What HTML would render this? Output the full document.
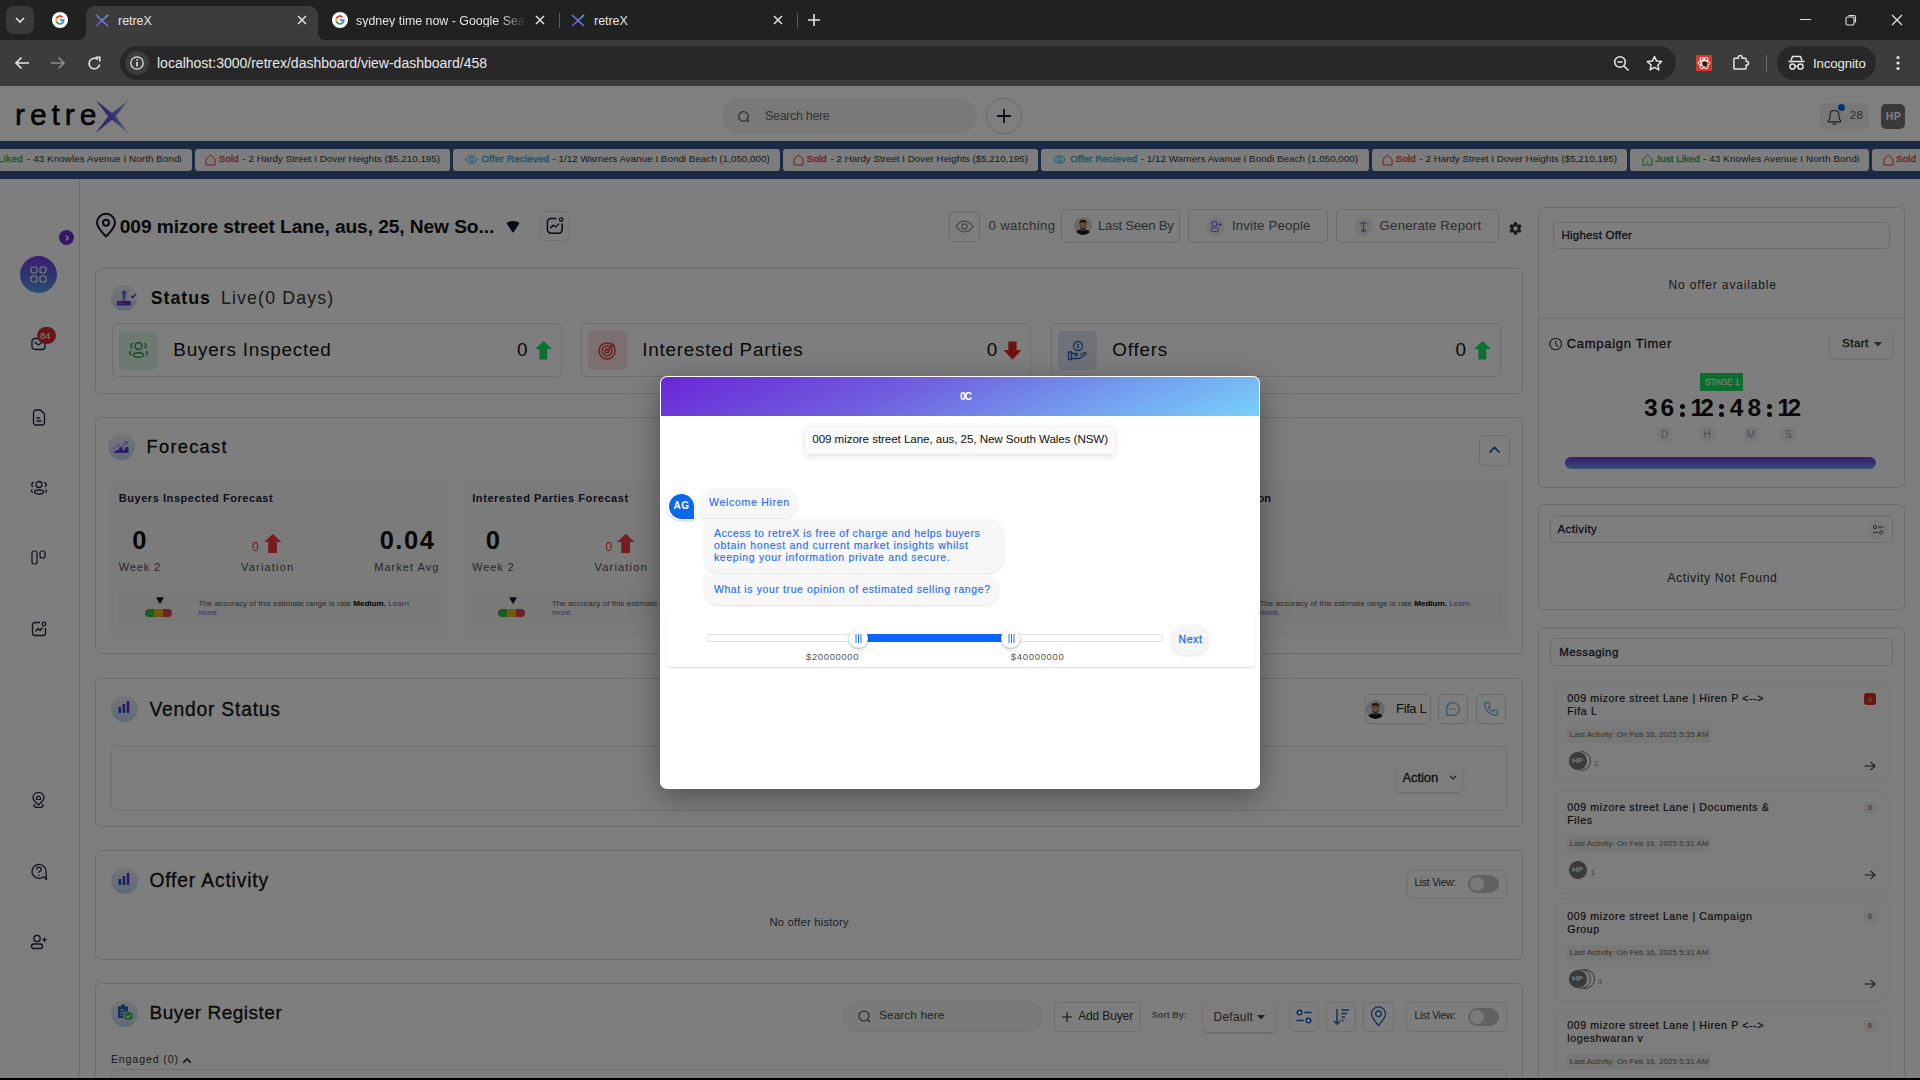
<!DOCTYPE html>
<html><head><meta charset="utf-8">
<style>
*{box-sizing:border-box;margin:0;padding:0}
html,body{width:1920px;height:1080px;overflow:hidden;background:#000;font-family:"Liberation Sans",sans-serif}
.a{position:absolute}
.t{position:absolute;white-space:nowrap;line-height:1}
svg{position:absolute;overflow:visible}
/* chrome */
#frame{left:0;top:0;width:1920px;height:40px;background:#202121}
#toolbar{left:0;top:40px;width:1920px;height:46px;background:#3c3c3c}
.tabtxt{color:#e3e3e3;font-size:12.4px}
/* page */
#page{left:0;top:86px;width:1920px;height:992px;background:#fcfcfc;overflow:hidden}
.card{position:absolute;border:1px solid #dcdcdc;border-radius:6px;background:#fdfdfd}
.btn{position:absolute;border:1px solid #d9d9d9;border-radius:5px;background:#fdfdfd}
#overlay{left:0;top:86px;width:1920px;height:992px;background:rgba(0,0,0,.5)}
</style></head><body>
<!-- ================= BROWSER CHROME ================= -->
<div id="frame" class="a"></div>
<div class="a" style="left:6px;top:6px;width:28px;height:28px;border-radius:8px;background:#3a3a3a"></div>
<svg style="left:14px;top:15px" width="12" height="10"><path d="M2 3 L6 7 L10 3" stroke="#e3e3e3" stroke-width="1.6" fill="none"></path></svg>
<!-- google icon -->
<svg style="left:52px;top:12px" width="16" height="16" viewBox="0 0 16 16"><circle cx="8" cy="8" r="8" fill="#fff"></circle>
<path d="M12.6 8.1c0-.3 0-.6-.1-.9H8v1.7h2.6a2.2 2.2 0 0 1-1 1.5v1.1h1.6c.9-.9 1.4-2 1.4-3.4z" fill="#4285f4"></path>
<path d="M8 12.8c1.3 0 2.4-.4 3.2-1.2l-1.6-1.2c-.4.3-1 .5-1.6.5-1.2 0-2.3-.8-2.6-2H3.7v1.3A4.8 4.8 0 0 0 8 12.8z" fill="#34a853"></path>
<path d="M5.4 8.9a2.9 2.9 0 0 1 0-1.8V5.8H3.7a4.8 4.8 0 0 0 0 4.4z" fill="#fbbc05"></path>
<path d="M8 5.1c.7 0 1.3.2 1.8.7l1.4-1.4A4.8 4.8 0 0 0 3.7 5.8l1.7 1.3c.3-1.2 1.4-2 2.6-2z" fill="#ea4335"></path></svg>
<!-- active tab -->
<div class="a" style="left:86px;top:6px;width:232px;height:34px;background:#3c3c3c;border-radius:9px 9px 0 0"></div>
<div class="a" style="left:78px;top:32px;width:8px;height:8px;background:radial-gradient(circle at 0 0,#202121 8px,#3c3c3c 8.5px)"></div>
<div class="a" style="left:318px;top:32px;width:8px;height:8px;background:radial-gradient(circle at 100% 0,#202121 8px,#3c3c3c 8.5px)"></div>
<svg style="left:95px;top:14px" width="14" height="13" viewBox="0 0 14 13"><defs><linearGradient id="gx" x1="0" y1="1" x2="1" y2="0"><stop offset="0" stop-color="#7b3fe4"></stop><stop offset="1" stop-color="#5fb0f0"></stop></linearGradient></defs><path d="M1 1 L13 12 M13 1 L1 12" stroke="url(#gx)" stroke-width="1.6"></path></svg>
<div class="t tabtxt" style="left:118px;top:14.5px">retreX</div>
<svg style="left:297px;top:15px" width="10" height="10"><path d="M1 1L9 9M9 1L1 9" stroke="#e3e3e3" stroke-width="1.5"></path></svg>
<!-- tab 2 -->
<svg style="left:332px;top:12px" width="16" height="16" viewBox="0 0 16 16"><circle cx="8" cy="8" r="8" fill="#fff"></circle>
<path d="M12.6 8.1c0-.3 0-.6-.1-.9H8v1.7h2.6a2.2 2.2 0 0 1-1 1.5v1.1h1.6c.9-.9 1.4-2 1.4-3.4z" fill="#4285f4"></path>
<path d="M8 12.8c1.3 0 2.4-.4 3.2-1.2l-1.6-1.2c-.4.3-1 .5-1.6.5-1.2 0-2.3-.8-2.6-2H3.7v1.3A4.8 4.8 0 0 0 8 12.8z" fill="#34a853"></path>
<path d="M5.4 8.9a2.9 2.9 0 0 1 0-1.8V5.8H3.7a4.8 4.8 0 0 0 0 4.4z" fill="#fbbc05"></path>
<path d="M8 5.1c.7 0 1.3.2 1.8.7l1.4-1.4A4.8 4.8 0 0 0 3.7 5.8l1.7 1.3c.3-1.2 1.4-2 2.6-2z" fill="#ea4335"></path></svg>
<div class="t tabtxt" style="left:356px;top:14.5px;font-size:12.4px;width:170px;overflow:hidden;-webkit-mask-image:linear-gradient(90deg,#000 85%,transparent)">sydney time now - Google Search</div>
<svg style="left:535px;top:15px" width="10" height="10"><path d="M1 1L9 9M9 1L1 9" stroke="#e3e3e3" stroke-width="1.5"></path></svg>
<div class="a" style="left:559px;top:13px;width:1px;height:15px;background:#5a5a5a"></div>
<!-- tab 3 -->
<svg style="left:571px;top:14px" width="14" height="13" viewBox="0 0 14 13"><path d="M1 1 L13 12 M13 1 L1 12" stroke="url(#gx)" stroke-width="1.6"></path></svg>
<div class="t tabtxt" style="left:594px;top:14.5px">retreX</div>
<svg style="left:773px;top:15px" width="10" height="10"><path d="M1 1L9 9M9 1L1 9" stroke="#e3e3e3" stroke-width="1.5"></path></svg>
<div class="a" style="left:797px;top:13px;width:1px;height:15px;background:#5a5a5a"></div>
<svg style="left:808px;top:14px" width="12" height="12"><path d="M6 0V12M0 6H12" stroke="#e3e3e3" stroke-width="1.6"></path></svg>
<!-- window controls -->
<div class="a" style="left:1800px;top:19px;width:11px;height:1px;background:#e3e3e3"></div>
<svg style="left:1845px;top:14px" width="12" height="12"><rect x="1" y="3" width="8" height="8" rx="1.5" stroke="#e3e3e3" fill="none" stroke-width="1.1"></rect><path d="M3.5 1.5H9a1.5 1.5 0 0 1 1.5 1.5V8.5" stroke="#e3e3e3" fill="none" stroke-width="1.1"></path></svg>
<svg style="left:1891px;top:14px" width="12" height="12"><path d="M1 1L11 11M11 1L1 11" stroke="#e3e3e3" stroke-width="1.3"></path></svg>

<div id="toolbar" class="a"></div>
<svg style="left:14px;top:56px" width="16" height="14"><path d="M15 7H2M7.5 1.5L2 7l5.5 5.5" stroke="#e3e3e3" stroke-width="1.7" fill="none"></path></svg>
<svg style="left:50px;top:56px" width="16" height="14"><path d="M1 7H14M8.5 1.5L14 7l-5.5 5.5" stroke="#8a8a8a" stroke-width="1.7" fill="none"></path></svg>
<svg style="left:87px;top:56px" width="15" height="15"><path d="M12.6 8.5A5.3 5.3 0 1 1 11 3.6" stroke="#e3e3e3" stroke-width="1.6" fill="none"></path><path d="M8.6 1.3H12.8V5.5" stroke="#e3e3e3" stroke-width="1.6" fill="none"></path></svg>
<div class="a" style="left:120px;top:46px;width:1556px;height:34px;border-radius:17px;background:#282828"></div>
<div class="a" style="left:125px;top:51px;width:24px;height:24px;border-radius:12px;background:#3c3c3c"></div>
<svg style="left:130px;top:56px" width="14" height="14"><circle cx="7" cy="7" r="6.2" stroke="#e3e3e3" stroke-width="1.3" fill="none"></circle><path d="M7 6V10.5" stroke="#e3e3e3" stroke-width="1.6"></path><circle cx="7" cy="3.9" r="0.9" fill="#e3e3e3"></circle></svg>
<div class="t" style="left:157px;top:56px;font-size:14px;color:#e8e8e8">localhost<span style="color:#e8e8e8">:3000/retrex/dashboard/view-dashboard/458</span></div>
<svg style="left:1613px;top:55px" width="17" height="17"><circle cx="7" cy="7" r="5.3" stroke="#e3e3e3" stroke-width="1.6" fill="none"></circle><path d="M4.5 7H9.5M11 11L15.5 15.5" stroke="#e3e3e3" stroke-width="1.6"></path></svg>
<svg style="left:1646px;top:55px" width="17" height="17" viewBox="0 0 17 17"><path d="M8.5 1.5l2.1 4.6 5 .5-3.7 3.4 1 4.9-4.4-2.5-4.4 2.5 1-4.9L1.4 6.6l5-.5z" stroke="#e3e3e3" stroke-width="1.5" fill="none" stroke-linejoin="round"></path></svg>
<div class="a" style="left:1696px;top:55px;width:16px;height:16px;background:#d8382e;border-radius:1px"></div>
<svg style="left:1696px;top:55px" width="16" height="16"><ellipse cx="8" cy="8" rx="6" ry="2.5" stroke="#fff" stroke-width="1" fill="none" transform="rotate(60 8 8)"></ellipse><ellipse cx="8" cy="8" rx="6" ry="2.5" stroke="#fff" stroke-width="1" fill="none" transform="rotate(-60 8 8)"></ellipse><ellipse cx="8" cy="8" rx="6" ry="2.5" stroke="#fff" stroke-width="1" fill="none"></ellipse><circle cx="9" cy="9" r="2.5" fill="#222"></circle></svg>
<svg style="left:1732px;top:53px" width="18" height="18"><path d="M2.8 5.2H6.3V4.3A1.9 1.9 0 0 1 10.1 4.3V5.2H13.2A0.9 0.9 0 0 1 14.1 6.1V8.3H14.6A1.9 1.9 0 0 1 14.6 12.1H14.1V15.2A0.9 0.9 0 0 1 13.2 16.1H2.8A0.9 0.9 0 0 1 1.9 15.2V6.1A0.9 0.9 0 0 1 2.8 5.2Z" stroke="#e3e3e3" stroke-width="1.5" fill="none" stroke-linejoin="round"></path></svg>
<div class="a" style="left:1766px;top:55px;width:1px;height:17px;background:#6a6a6a"></div>
<div class="a" style="left:1777px;top:46px;width:99px;height:34px;border-radius:17px;background:#282828"></div>
<svg style="left:1788px;top:55px" width="17" height="16"><path d="M3 5.5L4.5 1.5H12.5L14 5.5" stroke="#e3e3e3" stroke-width="1.5" fill="none"></path><path d="M0.5 6.5H16.5" stroke="#e3e3e3" stroke-width="1.6"></path><circle cx="4.5" cy="11.5" r="2.6" stroke="#e3e3e3" stroke-width="1.5" fill="none"></circle><circle cx="12.5" cy="11.5" r="2.6" stroke="#e3e3e3" stroke-width="1.5" fill="none"></circle><path d="M7 11.3H10" stroke="#e3e3e3" stroke-width="1.3"></path></svg>
<div class="t" style="left:1813px;top:56.5px;font-size:13.2px;color:#e8e8e8;letter-spacing:-0.1px">Incognito</div>
<svg style="left:1896px;top:55px" width="4" height="16"><circle cx="2" cy="2.5" r="1.6" fill="#e3e3e3"></circle><circle cx="2" cy="8" r="1.6" fill="#e3e3e3"></circle><circle cx="2" cy="13.5" r="1.6" fill="#e3e3e3"></circle></svg>

<div class="a" style="left:0px;top:86px;width:1920px;height:992px;background:#fdfdfd"></div>
<div class="a" style="left:0px;top:86px;width:1920px;height:55px;background:#ffffff"></div>
<div class="t" style="left: 15px; top: 99.61px; font-size: 30px; color: rgb(0, 0, 0); -webkit-text-stroke: 0.5px rgb(0, 0, 0); letter-spacing: 4.928px;">retre</div>
<svg style="left:95px;top:99px" width="34" height="35" viewBox="0 0 34 35"><defs><linearGradient id="lgx" x1="0" y1="0" x2="1" y2="0"><stop offset="0" stop-color="#6c3ee0"></stop><stop offset=".5" stop-color="#6a5ad8"></stop><stop offset="1" stop-color="#9ad4f4"></stop></linearGradient></defs>
<path d="M0.5 1 L20 16.5 L33.5 34 L14 18.5 Z" fill="url(#lgx)"></path><path d="M33.5 1 L14 16.5 L0.5 34 L20 18.5 Z" fill="url(#lgx)"></path></svg>
<div class="a" style="left:723px;top:98px;width:254px;height:36px;border-radius:18px;background:#f3f3f3"></div>
<svg style="left:738px;top:111px" width="12" height="12"><circle cx="5.5" cy="5.5" r="4.8" stroke="#555" stroke-width="1.2" fill="none"></circle><path d="M9 9L11 11" stroke="#555" stroke-width="1.2"></path></svg>
<div class="t" style="left: 765px; top: 109.92px; font-size: 12.5px; color: rgb(106, 106, 106); letter-spacing: -0.331px;">Search here</div>
<div class="a" style="left:986px;top:98px;width:36px;height:36px;border-radius:18px;border:1px solid #d2d2d2;background:#fff"></div>
<svg style="left:996px;top:108px" width="16" height="16"><path d="M8 1V15M1 8H15" stroke="#1b2238" stroke-width="1.8"></path></svg>
<div class="a" style="left:1820px;top:103px;width:49px;height:27px;border-radius:6px;background:#f1f1f1"></div>
<svg style="left:1827px;top:107px" width="15" height="19" viewBox="0 0 15 19"><path d="M7.5 3.5C4.6 3.5 3 5.6 3 8.3V11.6L1.3 13.5C1 14 1.2 14.9 2 14.9H13C13.8 14.9 14 14 13.7 13.5L12 11.6V8.3C12 5.6 10.4 3.5 7.5 3.5Z" stroke="#3a3a3a" stroke-width="1.1" fill="none"></path><path d="M5.5 16.5L7.5 17.5L9.5 16.5" stroke="#3a3a3a" stroke-width="1.1" fill="none"></path></svg>
<div class="a" style="left:1838px;top:104px;width:7px;height:7px;border-radius:4px;background:#0a66d8"></div>
<div class="t" style="left: 1849.8px; top: 110.17px; font-size: 11.5px; color: rgb(90, 90, 90); letter-spacing: 0.423px;">28</div>
<div class="a" style="left:1881px;top:104px;width:24px;height:25px;border-radius:5px;background:#747474"></div>
<div class="t" style="left: 1885.8px; top: 111.01px; font-size: 10.5px; color: rgb(255, 255, 255); font-weight: bold; letter-spacing: 0.346px;">HP</div>
<div class="a" style="left:0px;top:141px;width:1920px;height:38px;background:#37568a"></div>
<div class="a" style="left:-70px;top:149px;width:262px;height:22px;border-radius:3px;background:#fbfbfb"></div>
<svg style="left:-15.5px;top:154px" width="11" height="12" viewBox="0 0 11 12"><path d="M1 5.2L5.5 1L10 5.2V11H1Z" stroke="#1fae4b" stroke-width="1" fill="none" stroke-linejoin="round"></path><circle cx="5.5" cy="8.3" r="0.9" fill="#1fae4b"></circle></svg>
<div class="t" style="left: -2px; top: 154.2px; font-size: 9.8px; color: rgb(31, 174, 75); -webkit-text-stroke: 0.3px rgb(31, 174, 75); letter-spacing: 0.341px;">Liked</div>
<div class="t" style="left: 27px; top: 154.2px; font-size: 9.8px; color: rgb(51, 51, 51); letter-spacing: 0.094px;">- 43 Knowles Avenue I North Bondi</div>
<div class="a" style="left:195px;top:149px;width:255px;height:22px;border-radius:3px;background:#fbfbfb"></div>
<svg style="left:205.2px;top:154px" width="11" height="12" viewBox="0 0 11 12"><path d="M1 5.2L5.5 1L10 5.2V11H1Z" stroke="#e03a3a" stroke-width="1" fill="none" stroke-linejoin="round"></path></svg>
<div class="t" style="left: 218.7px; top: 154.2px; font-size: 9.8px; color: rgb(224, 58, 58); -webkit-text-stroke: 0.3px rgb(224, 58, 58); letter-spacing: 0.158px;">Sold</div>
<div class="t" style="left: 242.5px; top: 154.2px; font-size: 9.8px; color: rgb(51, 51, 51); letter-spacing: -0.004px;">- 2 Hardy Street I Dover Heights ($5,210,195)</div>
<div class="a" style="left:453px;top:149px;width:327px;height:22px;border-radius:3px;background:#fbfbfb"></div>
<svg style="left:464.5px;top:155px" width="13" height="9" viewBox="0 0 13 9"><path d="M0.8 4.5C2.5 1.8 4.4 0.8 6.5 0.8S10.5 1.8 12.2 4.5C10.5 7.2 8.6 8.2 6.5 8.2S2.5 7.2 0.8 4.5Z" stroke="#2aa7d8" stroke-width="1" fill="none"></path><circle cx="6.5" cy="4.5" r="1.8" stroke="#2aa7d8" stroke-width="1" fill="none"></circle></svg>
<div class="t" style="left: 481.5px; top: 154.2px; font-size: 9.8px; color: rgb(42, 167, 216); -webkit-text-stroke: 0.3px rgb(42, 167, 216); letter-spacing: 0.186px;">Offer Recieved</div>
<div class="t" style="left: 552.5px; top: 154.2px; font-size: 9.8px; color: rgb(51, 51, 51); letter-spacing: 0.023px;">- 1/12 Warners Avanue I Bondi Beach (1,050,000)</div>
<div class="a" style="left:783px;top:149px;width:255px;height:22px;border-radius:3px;background:#fbfbfb"></div>
<svg style="left:793.2px;top:154px" width="11" height="12" viewBox="0 0 11 12"><path d="M1 5.2L5.5 1L10 5.2V11H1Z" stroke="#e03a3a" stroke-width="1" fill="none" stroke-linejoin="round"></path></svg>
<div class="t" style="left: 806.7px; top: 154.2px; font-size: 9.8px; color: rgb(224, 58, 58); -webkit-text-stroke: 0.3px rgb(224, 58, 58); letter-spacing: 0.158px;">Sold</div>
<div class="t" style="left: 830.5px; top: 154.2px; font-size: 9.8px; color: rgb(51, 51, 51); letter-spacing: -0.004px;">- 2 Hardy Street I Dover Heights ($5,210,195)</div>
<div class="a" style="left:1041px;top:149px;width:328px;height:22px;border-radius:3px;background:#fbfbfb"></div>
<svg style="left:1053.2px;top:155px" width="13" height="9" viewBox="0 0 13 9"><path d="M0.8 4.5C2.5 1.8 4.4 0.8 6.5 0.8S10.5 1.8 12.2 4.5C10.5 7.2 8.6 8.2 6.5 8.2S2.5 7.2 0.8 4.5Z" stroke="#2aa7d8" stroke-width="1" fill="none"></path><circle cx="6.5" cy="4.5" r="1.8" stroke="#2aa7d8" stroke-width="1" fill="none"></circle></svg>
<div class="t" style="left: 1070.2px; top: 154.2px; font-size: 9.8px; color: rgb(42, 167, 216); -webkit-text-stroke: 0.3px rgb(42, 167, 216); letter-spacing: 0.147px;">Offer Recieved</div>
<div class="t" style="left: 1140.7px; top: 154.2px; font-size: 9.8px; color: rgb(51, 51, 51); letter-spacing: 0.025px;">- 1/12 Warners Avanue I Bondi Beach (1,050,000)</div>
<div class="a" style="left:1372px;top:149px;width:255px;height:22px;border-radius:3px;background:#fbfbfb"></div>
<svg style="left:1382.2px;top:154px" width="11" height="12" viewBox="0 0 11 12"><path d="M1 5.2L5.5 1L10 5.2V11H1Z" stroke="#e03a3a" stroke-width="1" fill="none" stroke-linejoin="round"></path></svg>
<div class="t" style="left: 1395.7px; top: 154.2px; font-size: 9.8px; color: rgb(224, 58, 58); -webkit-text-stroke: 0.3px rgb(224, 58, 58); letter-spacing: 0.158px;">Sold</div>
<div class="t" style="left: 1419.5px; top: 154.2px; font-size: 9.8px; color: rgb(51, 51, 51); letter-spacing: -0.004px;">- 2 Hardy Street I Dover Heights ($5,210,195)</div>
<div class="a" style="left:1630px;top:149px;width:239px;height:22px;border-radius:3px;background:#fbfbfb"></div>
<svg style="left:1641.8px;top:154px" width="11" height="12" viewBox="0 0 11 12"><path d="M1 5.2L5.5 1L10 5.2V11H1Z" stroke="#1fae4b" stroke-width="1" fill="none" stroke-linejoin="round"></path><circle cx="5.5" cy="8.3" r="0.9" fill="#1fae4b"></circle></svg>
<div class="t" style="left: 1655.3px; top: 154.2px; font-size: 9.8px; color: rgb(31, 174, 75); -webkit-text-stroke: 0.3px rgb(31, 174, 75); letter-spacing: 0.04px;">Just Liked</div>
<div class="t" style="left: 1703px; top: 154.2px; font-size: 9.8px; color: rgb(51, 51, 51); letter-spacing: 0.138px;">- 43 Knowles Avenue I North Bondi</div>
<div class="a" style="left:1872px;top:149px;width:255px;height:22px;border-radius:3px;background:#fbfbfb"></div>
<svg style="left:1882.5px;top:154px" width="11" height="12" viewBox="0 0 11 12"><path d="M1 5.2L5.5 1L10 5.2V11H1Z" stroke="#e03a3a" stroke-width="1" fill="none" stroke-linejoin="round"></path></svg>
<div class="t" style="left: 1896px; top: 154.2px; font-size: 9.8px; color: rgb(224, 58, 58); -webkit-text-stroke: 0.3px rgb(224, 58, 58); letter-spacing: 0.158px;">Sold</div>
<div class="t" style="left: 1919.8px; top: 154.2px; font-size: 9.8px; color: rgb(51, 51, 51); letter-spacing: -0.004px;">- 2 Hardy Street I Dover Heights ($5,210,195)</div>
<div class="a" style="left:0px;top:141px;width:0px;height:0px;"></div>
<div class="a" style="left:79px;top:179px;width:1px;height:899px;background:#d9d9d9"></div>
<div class="a" style="left:59px;top:230px;width:15px;height:15px;border-radius:8px;background:#6a2fd0"></div>
<svg style="left:63px;top:234px" width="8" height="8"><path d="M2.8 1.5L5.3 4L2.8 6.5" stroke="#fff" stroke-width="1.3" fill="none"></path></svg>
<div class="a" style="left:20px;top:256px;width:37px;height:37px;border-radius:19px;background:linear-gradient(180deg,#7a3de8 0%,#5a6fd8 60%,#4aa2e0 100%)"></div>
<svg style="left:30px;top:266px" width="17" height="17"><rect x="1" y="1" width="6" height="6" rx="2" stroke="#fff" stroke-width="1.2" fill="none"></rect><rect x="10" y="1" width="6" height="6" rx="2" stroke="#fff" stroke-width="1.2" fill="none"></rect><rect x="1" y="10" width="6" height="6" rx="2" stroke="#fff" stroke-width="1.2" fill="none"></rect><rect x="10" y="10" width="6" height="6" rx="2" stroke="#fff" stroke-width="1.2" fill="none"></rect></svg>
<svg style="left:31px;top:337px" width="16" height="14"><rect x="1" y="1.5" width="13" height="11" rx="3" stroke="#1b2238" stroke-width="1.3" fill="none"></rect><path d="M3.5 5L7.5 8L11.5 5" stroke="#1b2238" stroke-width="1.3" fill="none"></path></svg>
<div class="a" style="left:37px;top:327px;width:19px;height:17px;border-radius:9px;background:#d42a2a"></div>
<div class="t" style="left:40px;top:331px;font-size:9.5px;color:#fff">84</div>
<svg style="left:32px;top:409px" width="14" height="17"><path d="M1.5 3.5A2.5 2.5 0 0 1 4 1H8.5L12.5 5V13.5A2.5 2.5 0 0 1 10 16H4A2.5 2.5 0 0 1 1.5 13.5Z" stroke="#1b2238" stroke-width="1.3" fill="none"></path><path d="M4.5 9H8M4.5 12H9.5" stroke="#1b2238" stroke-width="1.3"></path></svg>
<svg style="left:30px;top:480px" width="18" height="15"><circle cx="9" cy="4.5" r="3" stroke="#1b2238" stroke-width="1.3" fill="none"></circle><ellipse cx="9" cy="12" rx="4.5" ry="2" stroke="#1b2238" stroke-width="1.3" fill="none"></ellipse><path d="M4 2.5A2 2 0 0 0 3.5 6.5M14 2.5A2 2 0 0 1 14.5 6.5M2.5 9.5C1 10 1 12 3 12.5M15.5 9.5C17 10 17 12 15 12.5" stroke="#1b2238" stroke-width="1.2" fill="none"></path></svg>
<svg style="left:31px;top:550px" width="16" height="15"><rect x="1" y="1" width="5" height="13" rx="2" stroke="#1b2238" stroke-width="1.2" fill="none"></rect><rect x="9" y="1" width="5" height="7" rx="2" stroke="#1b2238" stroke-width="1.2" fill="none"></rect></svg>
<svg style="left:31px;top:621px" width="16" height="16"><path d="M9 1.5H4A2.5 2.5 0 0 0 1.5 4V12A2.5 2.5 0 0 0 4 14.5H12A2.5 2.5 0 0 0 14.5 12V7" stroke="#1b2238" stroke-width="1.3" fill="none"></path><path d="M4.5 10.5L7 7.5L9 9.5L11.5 6.5" stroke="#1b2238" stroke-width="1.3" fill="none"></path><circle cx="13" cy="3" r="1.8" stroke="#1b2238" stroke-width="1.2" fill="none"></circle></svg>
<svg style="left:31px;top:792px" width="15" height="18"><path d="M7.5 13C4 10 2 7.8 2 5.8A5.5 5.5 0 0 1 13 5.8C13 7.8 11 10 7.5 13Z" stroke="#1b2238" stroke-width="1.3" fill="none"></path><path d="M5.5 5.5L7.5 4L9.5 5.5V7.5H5.5Z" stroke="#1b2238" stroke-width="1.1" fill="none"></path><path d="M4 12.5C2 13 2 15.5 7.5 15.5S13 13 11 12.5" stroke="#1b2238" stroke-width="1.2" fill="none"></path></svg>
<svg style="left:30px;top:863px" width="18" height="18"><path d="M16 8.5A7 7 0 1 0 13.5 13.8L16.5 16.5Z" stroke="#1b2238" stroke-width="1.3" fill="none" stroke-linejoin="round"></path><path d="M6.8 6.5A2.2 2.2 0 1 1 9.5 8.5C8.9 8.8 8.7 9.2 8.7 10" stroke="#1b2238" stroke-width="1.3" fill="none"></path><circle cx="8.7" cy="12.3" r="0.8" fill="#1b2238"></circle></svg>
<svg style="left:30px;top:934px" width="18" height="16"><circle cx="7" cy="4.5" r="3.2" stroke="#1b2238" stroke-width="1.3" fill="none"></circle><rect x="1.5" y="10" width="11" height="4.5" rx="2.2" stroke="#1b2238" stroke-width="1.3" fill="none"></rect><path d="M14.5 3.5V8M12.3 5.7H16.7" stroke="#1b2238" stroke-width="1.2"></path></svg>

<svg style="left:95px;top:213px" width="22" height="25" viewBox="0 0 22 25"><path d="M11 23.5C5 17.5 2 13.3 2 9.8A9 9 0 0 1 20 9.8C20 13.3 17 17.5 11 23.5Z" stroke="#0d1630" stroke-width="2" fill="none" stroke-linejoin="round"></path><circle cx="11" cy="9.8" r="3" stroke="#0d1630" stroke-width="2" fill="none"></circle></svg>
<div class="t" style="left: 119.75px; top: 216.75px; font-size: 19.2px; color: rgb(17, 17, 17); font-weight: bold; letter-spacing: -0.099px;">009 mizore street Lane, aus, 25, New So...</div>
<svg style="left:506px;top:220.5px" width="14" height="12"><path d="M1.6 2.2Q7 -0.2 12.4 2.2L7 10.6Z" fill="#0d1630" stroke="#0d1630" stroke-width="1.8" stroke-linejoin="round"></path></svg>
<div class="a" style="left:540px;top:211px;width:30px;height:30px;border:1px solid #e4e4e4;border-radius:5px"></div>
<svg style="left:546px;top:217px" width="18" height="18"><path d="M10.5 1.4H5A3.6 3.6 0 0 0 1.4 5V12.6A3.6 3.6 0 0 0 5 16.2H12.6A3.6 3.6 0 0 0 16.2 12.6V6.5" stroke="#0d1630" stroke-width="1.5" fill="none"></path><path d="M4.2 11.2L7.2 8.2L9.6 10L13.2 6.6" stroke="#0d1630" stroke-width="1.3" fill="none"></path><circle cx="15.2" cy="2.6" r="1.7" stroke="#0d1630" stroke-width="1.2" fill="none"></circle></svg>
<div class="a" style="left:949px;top:211px;width:31px;height:31px;border:1px solid #d9d9d9;border-radius:5px"></div>
<svg style="left:955px;top:220px" width="19" height="13"><path d="M1 6.5C3.5 2.8 6.2 1.2 9.5 1.2S15.5 2.8 18 6.5C15.5 10.2 12.8 11.8 9.5 11.8S3.5 10.2 1 6.5Z" stroke="#8a8a8a" stroke-width="1.2" fill="none"></path><circle cx="9.5" cy="6.5" r="2.6" stroke="#8a8a8a" stroke-width="1.2" fill="none"></circle></svg>
<div class="t" style="left: 988.4px; top: 219.33px; font-size: 13.2px; color: rgb(92, 92, 92); letter-spacing: 0.401px;">0 watching</div>
<div class="a" style="left:1061px;top:209px;width:119px;height:34px;border:1px solid #d9d9d9;border-radius:5px"></div>
<svg style="left:1074px;top:217.3px" width="18" height="18" viewBox="0 0 20 20"><defs><clipPath id="avc1"><circle cx="10" cy="10" r="10"></circle></clipPath></defs><g clip-path="url(#avc1)"><rect width="20" height="20" fill="#d6d2ce"></rect><path d="M1 21C1.5 15.5 5 14 10 14S18.5 15.5 19 21Z" fill="#151a26"></path><rect x="8" y="11.5" width="4" height="3.5" fill="#b98466"></rect><ellipse cx="10" cy="8.6" rx="3.9" ry="4.8" fill="#c48f70"></ellipse><path d="M5.9 8C5.6 4.6 7.4 3.1 10 3.1S14.4 4.6 14.1 8C13.6 6.4 12.4 5.6 10 5.6S6.4 6.4 5.9 8Z" fill="#2a1f19"></path><path d="M6.6 10.5C7 13 8.4 13.6 10 13.6S13 13 13.4 10.5C12.6 12 11.4 12.3 10 12.3S7.4 12 6.6 10.5Z" fill="#3a2a22"></path><path d="M8.6 11.4H11.4" stroke="#f4f0ea" stroke-width="0.7"></path></g></svg>
<div class="t" style="left: 1098px; top: 219.23px; font-size: 13.2px; color: rgb(92, 92, 92); letter-spacing: -0.236px;">Last Seen By</div>
<div class="a" style="left:1188px;top:209px;width:140px;height:34px;border:1px solid #d9d9d9;border-radius:5px"></div>
<div class="a" style="left:1206px;top:217px;width:19px;height:19px;border-radius:10px;background:#ebebeb"></div>
<svg style="left:1209px;top:220px" width="13" height="13"><circle cx="5.5" cy="4" r="2.5" stroke="#7a5ce0" stroke-width="1.1" fill="none"></circle><rect x="2" y="8" width="7.5" height="3.5" rx="1.7" stroke="#6a7ce0" stroke-width="1.1" fill="none"></rect><path d="M11 3V6.5M9.3 4.7H12.7" stroke="#7a5ce0" stroke-width="1"></path></svg>
<div class="t" style="left: 1232px; top: 219.23px; font-size: 13.2px; color: rgb(92, 92, 92); letter-spacing: 0.175px;">Invite People</div>
<div class="a" style="left:1336px;top:209px;width:163px;height:34px;border:1px solid #d9d9d9;border-radius:5px"></div>
<div class="a" style="left:1354px;top:217px;width:19px;height:19px;border-radius:10px;background:#ebebeb"></div>
<svg style="left:1357px;top:220px" width="13" height="13"><path d="M3 4A4.5 4.5 0 0 1 10 4" stroke="#7a5ce0" stroke-width="1.1" fill="none"></path><path d="M6.5 3V12M4 9.5L6.5 12L9 9.5" stroke="#6a6ad0" stroke-width="1.1" fill="none"></path></svg>
<div class="t" style="left: 1379.6px; top: 219.23px; font-size: 13.2px; color: rgb(92, 92, 92); letter-spacing: 0.23px;">Generate Report</div>
<svg style="left:1508px;top:221px" width="15" height="15" viewBox="0 0 24 24"><path fill="#333" d="M19.4 13c.04-.33.1-.66.1-1s-.06-.67-.1-1l2.1-1.65c.2-.15.25-.42.13-.64l-2-3.46c-.12-.22-.4-.3-.6-.22l-2.5 1c-.52-.4-1.080-.73-1.7-.98l-.37-2.65A.5.5 0 0 0 14 2h-4a.5.5 0 0 0-.5.42l-.37 2.65c-.62.25-1.18.58-1.7.98l-2.5-1a.5.5 0 0 0-.6.22l-2 3.46c-.13.22-.07.5.12.64L4.570 11c-.04.33-.07.67-.07 1s.03.67.07 1l-2.1 1.65c-.2.15-.25.42-.13.64l2 3.46c.12.22.4.3.6.22l2.5-1c.52.4 1.080.73 1.7.98l.37 2.65c.04.24.25.42.5.42h4c.25 0 .46-.18.5-.42l.37-2.65c.62-.25 1.18-.58 1.7-.98l2.5 1c.22.08.48 0 .6-.22l2-3.46c.12-.22.07-.5-.12-.64zM12 15.5A3.5 3.5 0 1 1 12 8.5a3.5 3.5 0 0 1 0 7z"></path></svg>
<!--MAINBODY-->
<div class="a" style="left:95px;top:268px;width:1428px;height:126px;border:1px solid #dadada;border-radius:6px;background:#fdfdfd"></div>
<div class="a" style="left:111px;top:285px;width:26px;height:26px;border-radius:50%;background:linear-gradient(180deg,#ebeef3,#bcd4ee)"></div>
<svg style="left:111px;top:285px" width="28" height="26"><defs><linearGradient id="sg1" x1="0" y1="0" x2="0" y2="1"><stop offset="0" stop-color="#4a8ae0"></stop><stop offset="1" stop-color="#6a40d8"></stop></linearGradient></defs><path d="M13.1 4.5L9.6 8.6H11.8V13.2H14.4V8.6H16.6Z" fill="url(#sg1)"></path><rect x="11.9" y="14" width="2.4" height="1.5" fill="#6a40d8"></rect><rect x="5.9" y="16.1" width="13.9" height="4.4" rx="1" fill="#6a2fd0"></rect><path d="M8 18.3H13" stroke="#c8b8f0" stroke-width="0.9" stroke-dasharray="1.2 0.8"></path><circle cx="22.3" cy="10.7" r="5" fill="#eef0f6"></circle><path d="M19.9 10.8L21.7 12.6L24.8 9" stroke="#6a2fd0" stroke-width="1.5" fill="none"></path></svg>
<div class="t" style="left: 150.8px; top: 289.93px; font-size: 17.8px; color: rgb(17, 17, 17); font-weight: bold; letter-spacing: 0.956px;">Status</div>
<div class="t" style="left: 221px; top: 289.93px; font-size: 17.8px; color: rgb(51, 51, 51); letter-spacing: 1.119px;">Live(0 Days)</div>
<div class="a" style="left:112px;top:323px;width:450px;height:54px;border:1px solid #e0e0e0;border-radius:5px;background:#fdfdfd"></div>
<div class="a" style="left:119px;top:331px;width:39px;height:39px;border-radius:5px;background:#ddf2e4"></div>
<svg style="left:128px;top:341px" width="21" height="19"><circle cx="10.5" cy="5" r="3.5" stroke="#22a050" stroke-width="1.4" fill="none"></circle><ellipse cx="10.5" cy="14" rx="5" ry="2.3" stroke="#22a050" stroke-width="1.4" fill="none"></ellipse><path d="M5 2.5A2.3 2.3 0 0 0 4.5 7M16 2.5A2.3 2.3 0 0 1 16.5 7M3 10.5C1 11 1 13.5 3.5 14M18 10.5C20 11 20 13.5 17.5 14" stroke="#22a050" stroke-width="1.3" fill="none"></path></svg>
<div class="t" style="left: 173.3px; top: 341px; font-size: 18.9px; color: rgb(17, 17, 17); letter-spacing: 0.77px;">Buyers Inspected</div>
<div class="t" style="left:517.00px;top:341.00px;font-size:18.9px;color:#111">0</div>
<svg style="left:535px;top:341px" width="18" height="19"><path d="M8.5 0L17 8H12.2V18.6H4.4V8H0Z" fill="#14e066"></path></svg>
<div class="a" style="left:581px;top:323px;width:450px;height:54px;border:1px solid #e0e0e0;border-radius:5px;background:#fdfdfd"></div>
<div class="a" style="left:588px;top:331px;width:39px;height:39px;border-radius:5px;background:#f8dede"></div>
<svg style="left:597px;top:340px" width="21" height="21"><circle cx="10" cy="11" r="8" stroke="#d83a3a" stroke-width="1.4" fill="none"></circle><circle cx="10" cy="11" r="5" stroke="#d83a3a" stroke-width="1.4" fill="none"></circle><circle cx="10" cy="11" r="2" stroke="#d83a3a" stroke-width="1.4" fill="none"></circle><path d="M10 11L16.5 4.5M15 2.5V5.5H18" stroke="#d83a3a" stroke-width="1.4" fill="none"></path></svg>
<div class="t" style="left: 642.3px; top: 341px; font-size: 18.9px; color: rgb(17, 17, 17); letter-spacing: 0.732px;">Interested Parties</div>
<div class="t" style="left:986.70px;top:341.00px;font-size:18.9px;color:#111">0</div>
<svg style="left:1004.3px;top:341px" width="18" height="19"><path d="M4.4 0.5H12.6V9H17.3L8.5 18.8L-0.3 9H4.4Z" fill="#e02424"></path></svg>
<div class="a" style="left:1051px;top:323px;width:450px;height:54px;border:1px solid #e0e0e0;border-radius:5px;background:#fdfdfd"></div>
<div class="a" style="left:1058px;top:331px;width:39px;height:39px;border-radius:5px;background:#dde6f4"></div>
<svg style="left:1067px;top:340px" width="21" height="21"><circle cx="11" cy="6" r="4.5" stroke="#2a5ab8" stroke-width="1.3" fill="none"></circle><path d="M11 3.5V8.5M9.8 4.8H12.2M9.8 7.2H12.2" stroke="#2a5ab8" stroke-width="1"></path><path d="M1.5 12V19.5H4.5V12Z" stroke="#2a5ab8" stroke-width="1.3" fill="none"></path><path d="M4.5 13.5H9.5C11 13.5 11 15.5 9.5 15.5H7.5M4.5 18.5H12L18.5 14.5C19.5 13.5 18.5 12 17 12.8L13 15" stroke="#2a5ab8" stroke-width="1.3" fill="none"></path></svg>
<div class="t" style="left: 1112.3px; top: 341px; font-size: 18.9px; color: rgb(17, 17, 17); letter-spacing: 0.784px;">Offers</div>
<div class="t" style="left:1455.60px;top:341.00px;font-size:18.9px;color:#111">0</div>
<svg style="left:1473.8px;top:341px" width="18" height="19"><path d="M8.5 0L17 8H12.2V18.6H4.4V8H0Z" fill="#14e066"></path></svg>
<div class="a" style="left:95px;top:417px;width:1428px;height:237px;border:1px solid #dadada;border-radius:6px;background:#fdfdfd"></div>
<div class="a" style="left:108px;top:433px;width:27px;height:27px;border-radius:50%;background:linear-gradient(180deg,#ebeef3,#bcd4ee)"></div>
<svg style="left:113px;top:440px" width="17" height="14"><path d="M1 9L5 4.5L8.5 7.5L13 2.5" stroke="#6a4ad8" stroke-width="0.8" fill="none"></path><path d="M11.5 2H14V4.5" stroke="#6a4ad8" stroke-width="0.9" fill="none"></path><path d="M1 13H15.5V7H12V10H9.5V7.5H6V10H3V11.5H1Z" fill="#5a3ad0"></path></svg>
<div class="t" style="left: 146.6px; top: 438.39px; font-size: 18.2px; color: rgb(17, 17, 17); -webkit-text-stroke: 0.3px rgb(17, 17, 17); letter-spacing: 1.299px;">Forecast</div>
<div class="a" style="left:1479px;top:435px;width:31px;height:31px;border:1px solid #dcdcdc;border-radius:5px"></div>
<svg style="left:1488px;top:446px" width="13" height="8"><path d="M1.5 6.5L6.5 1.5L11.5 6.5" stroke="#1a4aa0" stroke-width="1.6" fill="none"></path></svg>
<div class="a" style="left:109px;top:480px;width:340px;height:158px;border-radius:6px;background:#f6f6f6"></div>
<div class="a" style="left:118px;top:591px;width:322px;height:31px;background:#f2f2f2"></div>
<div class="t" style="left: 118.75px; top: 493.39px; font-size: 11px; color: rgb(27, 34, 56); font-weight: bold; letter-spacing: 0.556px;">Buyers Inspected Forecast</div>
<div class="t" style="left: 132.3px; top: 528.16px; font-size: 25.5px; color: rgb(17, 17, 17); font-weight: bold; letter-spacing: 1.352px;">0</div>
<div class="t" style="left: 118.75px; top: 562.29px; font-size: 11px; color: rgb(74, 77, 90); letter-spacing: 0.877px;">Week 2</div>
<div class="t" style="left:252.00px;top:540.64px;font-size:12px;color:#e03030">0</div>
<svg style="left:263.75px;top:534.4px" width="18" height="20"><path d="M8.75 0L17.5 8.1H13V19H4.2V8.1H0Z" fill="#f03a3a"></path></svg>
<div class="t" style="left: 241.1px; top: 562.29px; font-size: 11px; color: rgb(74, 77, 90); letter-spacing: 1.171px;">Variation</div>
<div class="t" style="left: 379.7px; top: 528.16px; font-size: 25.5px; color: rgb(17, 17, 17); font-weight: bold; letter-spacing: 1.5px;">0.04</div>
<div class="t" style="left: 374.2px; top: 562.29px; font-size: 11px; color: rgb(74, 77, 90); letter-spacing: 1.039px;">Market Avg</div>
<svg style="left:155.6px;top:597.3px" width="8" height="7"><path d="M0.8 0.8H7.2L4 6.3Z" fill="#0d1630" stroke="#0d1630" stroke-linejoin="round"></path></svg>
<div class="a" style="left:144.7px;top:608.8px;width:27.3px;height:8.2px;border-radius:4px;background:linear-gradient(90deg,#2cb84a 0 33%,#e6b422 33% 66%,#e04444 66%)"></div>
<div class="t" style="left:198.4px;top:598.5px;font-size:8.1px;line-height:9.2px;color:#555;white-space:normal;width:232px">The accuracy of this estimate range is rate <b style="color:#000">Medium.</b> <span style="color:#7a5ab8">Learn more.</span></div>
<div class="a" style="left:462.5px;top:480px;width:340px;height:158px;border-radius:6px;background:#f6f6f6"></div>
<div class="a" style="left:471.5px;top:591px;width:322px;height:31px;background:#f2f2f2"></div>
<div class="t" style="left: 472.25px; top: 493.39px; font-size: 11px; color: rgb(27, 34, 56); font-weight: bold; letter-spacing: 0.563px;">Interested Parties Forecast</div>
<div class="t" style="left: 485.8px; top: 528.16px; font-size: 25.5px; color: rgb(17, 17, 17); font-weight: bold; letter-spacing: 1.352px;">0</div>
<div class="t" style="left: 472.25px; top: 562.29px; font-size: 11px; color: rgb(74, 77, 90); letter-spacing: 0.877px;">Week 2</div>
<div class="t" style="left:605.50px;top:540.64px;font-size:12px;color:#e03030">0</div>
<svg style="left:617.25px;top:534.4px" width="18" height="20"><path d="M8.75 0L17.5 8.1H13V19H4.2V8.1H0Z" fill="#f03a3a"></path></svg>
<div class="t" style="left: 594.6px; top: 562.29px; font-size: 11px; color: rgb(74, 77, 90); letter-spacing: 1.171px;">Variation</div>
<div class="t" style="left: 733.2px; top: 528.16px; font-size: 25.5px; color: rgb(17, 17, 17); font-weight: bold; letter-spacing: 1.5px;">0.04</div>
<div class="t" style="left: 727.7px; top: 562.29px; font-size: 11px; color: rgb(74, 77, 90); letter-spacing: 1.039px;">Market Avg</div>
<svg style="left:509.1px;top:597.3px" width="8" height="7"><path d="M0.8 0.8H7.2L4 6.3Z" fill="#0d1630" stroke="#0d1630" stroke-linejoin="round"></path></svg>
<div class="a" style="left:498.2px;top:608.8px;width:27.3px;height:8.2px;border-radius:4px;background:linear-gradient(90deg,#2cb84a 0 33%,#e6b422 33% 66%,#e04444 66%)"></div>
<div class="t" style="left:551.9px;top:598.5px;font-size:8.1px;line-height:9.2px;color:#555;white-space:normal;width:232px">The accuracy of this estimate range is rate <b style="color:#000">Medium.</b> <span style="color:#7a5ab8">Learn more.</span></div>
<div class="a" style="left:816px;top:480px;width:340px;height:158px;border-radius:6px;background:#f6f6f6"></div>
<div class="a" style="left:825px;top:591px;width:322px;height:31px;background:#f2f2f2"></div>
<div class="t" style="left:825.75px;top:493.39px;font-size:11px;color:#1b2238;font-weight:bold">Offers Forecast</div>
<div class="t" style="left: 839.3px; top: 528.16px; font-size: 25.5px; color: rgb(17, 17, 17); font-weight: bold; letter-spacing: 1.352px;">0</div>
<div class="t" style="left: 825.75px; top: 562.29px; font-size: 11px; color: rgb(74, 77, 90); letter-spacing: 0.877px;">Week 2</div>
<div class="t" style="left:959.00px;top:540.64px;font-size:12px;color:#e03030">0</div>
<svg style="left:970.75px;top:534.4px" width="18" height="20"><path d="M8.75 0L17.5 8.1H13V19H4.2V8.1H0Z" fill="#f03a3a"></path></svg>
<div class="t" style="left: 948.1px; top: 562.29px; font-size: 11px; color: rgb(74, 77, 90); letter-spacing: 1.171px;">Variation</div>
<div class="t" style="left: 1086.7px; top: 528.16px; font-size: 25.5px; color: rgb(17, 17, 17); font-weight: bold; letter-spacing: 1.5px;">0.04</div>
<div class="t" style="left: 1081.2px; top: 562.29px; font-size: 11px; color: rgb(74, 77, 90); letter-spacing: 1.039px;">Market Avg</div>
<svg style="left:862.6px;top:597.3px" width="8" height="7"><path d="M0.8 0.8H7.2L4 6.3Z" fill="#0d1630" stroke="#0d1630" stroke-linejoin="round"></path></svg>
<div class="a" style="left:851.7px;top:608.8px;width:27.3px;height:8.2px;border-radius:4px;background:linear-gradient(90deg,#2cb84a 0 33%,#e6b422 33% 66%,#e04444 66%)"></div>
<div class="t" style="left:905.4px;top:598.5px;font-size:8.1px;line-height:9.2px;color:#555;white-space:normal;width:232px">The accuracy of this estimate range is rate <b style="color:#000">Medium.</b> <span style="color:#7a5ab8">Learn more.</span></div>
<div class="a" style="left:1170px;top:480px;width:340px;height:158px;border-radius:6px;background:#f6f6f6"></div>
<div class="a" style="left:1179px;top:591px;width:322px;height:31px;background:#f2f2f2"></div>
<div class="t" style="left: 1182px; top: 493.39px; font-size: 11px; color: rgb(27, 34, 56); font-weight: bold; letter-spacing: -0.025px;">Vendor Valuation</div>
<svg style="left:1216.6px;top:597.3px" width="8" height="7"><path d="M0.8 0.8H7.2L4 6.3Z" fill="#0d1630" stroke="#0d1630" stroke-linejoin="round"></path></svg>
<div class="a" style="left:1205.7px;top:608.8px;width:27.3px;height:8.2px;border-radius:4px;background:linear-gradient(90deg,#2cb84a 0 33%,#e6b422 33% 66%,#e04444 66%)"></div>
<div class="t" style="left:1259.4px;top:598.5px;font-size:8.1px;line-height:9.2px;color:#555;white-space:normal;width:232px">The accuracy of this estimate range is rate <b style="color:#000">Medium.</b> <span style="color:#7a5ab8">Learn more.</span></div>
<div class="a" style="left:95px;top:678px;width:1428px;height:149px;border:1px solid #dadada;border-radius:6px;background:#fdfdfd"></div>
<div class="a" style="left:111px;top:695px;width:27px;height:27px;border-radius:50%;background:linear-gradient(180deg,#ebeef3,#bcd4ee)"></div>
<svg style="left:118px;top:700px" width="12" height="15"><rect x="0.5" y="7" width="2.6" height="6" rx="0.6" fill="#2a4ab8"></rect><rect x="4.6" y="4" width="2.6" height="9" rx="0.6" fill="#3a3ac0"></rect><rect x="8.7" y="1" width="2.6" height="12" rx="0.6" fill="#5a2ad0"></rect></svg>
<div class="t" style="left: 149.4px; top: 699.66px; font-size: 19.3px; color: rgb(17, 17, 17); -webkit-text-stroke: 0.3px rgb(17, 17, 17); letter-spacing: 0.784px;">Vendor Status</div>
<div class="a" style="left:1365px;top:694px;width:66px;height:30px;border:1px solid #d6d6d6;border-radius:5px"></div>
<svg style="left:1366.0px;top:700.0px" width="19.0" height="19.0" viewBox="0 0 20 20"><defs><clipPath id="avc2"><circle cx="10" cy="10" r="10"></circle></clipPath></defs><g clip-path="url(#avc2)"><rect width="20" height="20" fill="#d6d2ce"></rect><path d="M1 21C1.5 15.5 5 14 10 14S18.5 15.5 19 21Z" fill="#151a26"></path><rect x="8" y="11.5" width="4" height="3.5" fill="#b98466"></rect><ellipse cx="10" cy="8.6" rx="3.9" ry="4.8" fill="#c48f70"></ellipse><path d="M5.9 8C5.6 4.6 7.4 3.1 10 3.1S14.4 4.6 14.1 8C13.6 6.4 12.4 5.6 10 5.6S6.4 6.4 5.9 8Z" fill="#2a1f19"></path><path d="M6.6 10.5C7 13 8.4 13.6 10 13.6S13 13 13.4 10.5C12.6 12 11.4 12.3 10 12.3S7.4 12 6.6 10.5Z" fill="#3a2a22"></path><path d="M8.6 11.4H11.4" stroke="#f4f0ea" stroke-width="0.7"></path></g></svg>
<div class="t" style="left: 1396.1px; top: 702.3px; font-size: 13px; color: rgb(34, 34, 34); letter-spacing: -0.395px;">Fifa L</div>
<div class="a" style="left:1438px;top:694px;width:30px;height:30px;border:1px solid #d6d6d6;border-radius:5px"></div>
<svg style="left:1445px;top:701px" width="16" height="16"><path d="M8 1.5A6.5 6.5 0 0 0 2.2 11L1.5 14.5L5 13.8A6.5 6.5 0 1 0 8 1.5Z" stroke="#4aaed8" stroke-width="1.1" fill="none" stroke-linejoin="round"></path><circle cx="5.2" cy="8" r="0.8" fill="#4aaed8"></circle><circle cx="8" cy="8" r="0.8" fill="#4aaed8"></circle><circle cx="10.8" cy="8" r="0.8" fill="#4aaed8"></circle></svg>
<div class="a" style="left:1476px;top:694px;width:30px;height:30px;border:1px solid #d6d6d6;border-radius:5px"></div>
<svg style="left:1483px;top:701px" width="16" height="16"><path d="M3.5 1.5L6 1.8L7.2 5L5.6 6.3C6.5 8.3 7.8 9.6 9.8 10.5L11.1 8.9L14.3 10.1L14.5 12.6C14.5 13.6 13.5 14.5 12.5 14.4C6.5 13.8 2.2 9.5 1.6 3.5C1.5 2.5 2.4 1.5 3.5 1.5Z" stroke="#4aaed8" stroke-width="1.1" fill="none"></path></svg>
<div class="a" style="left:111px;top:746px;width:1396px;height:65px;border:1px solid #e0e0e0;border-radius:5px"></div>
<div class="a" style="left:1396px;top:765px;width:67px;height:27px;border-radius:5px;background:#fafafa;box-shadow:0 1px 3px rgba(0,0,0,.2)"></div>
<div class="t" style="left: 1402.5px; top: 770.7px; font-size: 13px; color: rgb(34, 34, 34); -webkit-text-stroke: 0.3px rgb(34, 34, 34); letter-spacing: -0.08px;">Action</div>
<svg style="left:1449px;top:775px" width="8" height="6"><path d="M1 1L4 4L7 1" stroke="#333" stroke-width="1.1" fill="none"></path></svg>
<div class="a" style="left:95px;top:850px;width:1428px;height:110px;border:1px solid #dadada;border-radius:6px;background:#fdfdfd"></div>
<div class="a" style="left:111px;top:867px;width:27px;height:27px;border-radius:50%;background:linear-gradient(180deg,#ebeef3,#bcd4ee)"></div>
<svg style="left:118px;top:872px" width="12" height="15"><rect x="0.5" y="7" width="2.6" height="6" rx="0.6" fill="#2a4ab8"></rect><rect x="4.6" y="4" width="2.6" height="9" rx="0.6" fill="#3a3ac0"></rect><rect x="8.7" y="1" width="2.6" height="12" rx="0.6" fill="#5a2ad0"></rect></svg>
<div class="t" style="left: 149.4px; top: 871.26px; font-size: 19.3px; color: rgb(17, 17, 17); -webkit-text-stroke: 0.3px rgb(17, 17, 17); letter-spacing: 0.836px;">Offer Activity</div>
<div class="a" style="left:1407px;top:870px;width:100px;height:29px;border:1px solid #e0e0e0;border-radius:5px"></div>
<div class="t" style="left: 1414.4px; top: 877.93px; font-size: 10px; color: rgb(51, 51, 51); letter-spacing: -0.103px;">List View:</div>
<div class="a" style="left:1468px;top:875px;width:31px;height:18px;border-radius:9px;background:#c4c4c4"></div>
<div class="a" style="left:1470px;top:877px;width:14px;height:14px;border-radius:7px;background:#f4f4f4"></div>
<div class="t" style="left: 769.5px; top: 916.53px; font-size: 11.3px; color: rgb(58, 61, 74); letter-spacing: 0.18px;">No offer history</div>
<div class="a" style="left:95px;top:983px;width:1428px;height:120px;border:1px solid #dadada;border-radius:6px;background:#fdfdfd"></div>
<div class="a" style="left:111px;top:1000px;width:27px;height:27px;border-radius:50%;background:linear-gradient(180deg,#ebeef3,#bcd4ee)"></div>
<svg style="left:116px;top:1003px" width="17" height="18"><path d="M2 3.5H5L5.5 1.5H8.5L9 3.5H12V8.5A4 4 0 0 0 8 15H2Z" fill="#2a5ab8"></path><path d="M4 7H9M4 9.5H7.5M4 12H6.5" stroke="#dfe8f4" stroke-width="0.9"></path><circle cx="12.5" cy="13" r="4" fill="#2cb84a"></circle><path d="M10.6 13L12 14.4L14.5 11.8" stroke="#fff" stroke-width="1.1" fill="none"></path></svg>
<div class="t" style="left: 149.5px; top: 1003.12px; font-size: 19px; color: rgb(17, 17, 17); -webkit-text-stroke: 0.3px rgb(17, 17, 17); letter-spacing: 0.504px;">Buyer Register</div>
<div class="t" style="left: 110.9px; top: 1053.63px; font-size: 10.6px; color: rgb(51, 51, 51); letter-spacing: 0.874px;">Engaged (0)</div>
<svg style="left:182px;top:1056.5px" width="10" height="7"><path d="M1.2 5.8L5 2L8.8 5.8" stroke="#222" stroke-width="1.6" fill="none"></path></svg>
<div class="a" style="left:111px;top:1069px;width:1396px;height:40px;border:1px solid #e0e0e0;border-radius:5px"></div>
<div class="a" style="left:843px;top:1001px;width:200px;height:31px;border-radius:16px;border:1px solid #e8e8e8;background:#f5f5f5"></div>
<svg style="left:858px;top:1010px" width="13" height="13"><circle cx="6" cy="6" r="5" stroke="#444" stroke-width="1.1" fill="none"></circle><path d="M9.7 9.7L12 12" stroke="#444" stroke-width="1.1"></path></svg>
<div class="t" style="left: 879px; top: 1009.51px; font-size: 11.8px; color: rgb(68, 68, 68); letter-spacing: 0.106px;">Search here</div>
<div class="a" style="left:1054px;top:1002px;width:87px;height:30px;border:1px solid #dcdcdc;border-radius:5px"></div>
<svg style="left:1062px;top:1012px" width="10" height="10"><path d="M5 0V10M0 5H10" stroke="#333" stroke-width="1.2"></path></svg>
<div class="t" style="left: 1078.2px; top: 1010.34px; font-size: 12px; color: rgb(51, 51, 51); letter-spacing: -0.136px;">Add Buyer</div>
<div class="t" style="left: 1151.8px; top: 1011.38px; font-size: 9px; color: rgb(119, 119, 119); font-weight: bold; letter-spacing: 0.001px;">Sort By:</div>
<div class="a" style="left:1203px;top:1002px;width:73px;height:30px;border-radius:5px;background:#fafafa;box-shadow:0 1px 3px rgba(0,0,0,.22)"></div>
<div class="t" style="left: 1213.5px; top: 1010.84px; font-size: 12px; color: rgb(68, 68, 68); letter-spacing: 0.238px;">Default</div>
<svg style="left:1257px;top:1015px" width="8" height="5"><path d="M0 0H8L4 4.5Z" fill="#444"></path></svg>
<div class="a" style="left:1289px;top:1002px;width:30px;height:30px;border:1px solid #e0e0e0;border-radius:5px"></div>
<svg style="left:1295px;top:1008px" width="18" height="18"><circle cx="4.5" cy="4.5" r="2.3" stroke="#2a5ab8" stroke-width="1.4" fill="none"></circle><path d="M9 4.5H16.5M1.5 12.5H9" stroke="#2a5ab8" stroke-width="1.4"></path><circle cx="13.5" cy="12.5" r="2.3" stroke="#2a5ab8" stroke-width="1.4" fill="none"></circle></svg>
<div class="a" style="left:1326px;top:1002px;width:30px;height:30px;border:1px solid #e0e0e0;border-radius:5px"></div>
<svg style="left:1333px;top:1008px" width="17" height="18"><path d="M4 1V16M1 13L4 16.2L7 13" stroke="#2a5ab8" stroke-width="1.4" fill="none"></path><path d="M8.5 2H16M8.5 5.5H14M8.5 9H12M8.5 12.5H10.5" stroke="#2a5ab8" stroke-width="1.4"></path></svg>
<div class="a" style="left:1363px;top:1002px;width:31px;height:30px;border:1px solid #e0e0e0;border-radius:5px"></div>
<svg style="left:1370px;top:1006px" width="17" height="21"><path d="M8.5 19.5C4 14.5 1.5 11 1.5 7.8A7 7 0 0 1 15.5 7.8C15.5 11 13 14.5 8.5 19.5Z" stroke="#2a5ab8" stroke-width="1.3" fill="none"></path><circle cx="8.5" cy="7.8" r="2.8" stroke="#2a5ab8" stroke-width="1.3" fill="none"></circle></svg>
<div class="a" style="left:1406px;top:1002px;width:101px;height:30px;border:1px solid #e0e0e0;border-radius:5px"></div>
<div class="t" style="left: 1414.6px; top: 1010.53px; font-size: 10px; color: rgb(51, 51, 51); letter-spacing: -0.147px;">List View:</div>
<div class="a" style="left:1468px;top:1008px;width:31px;height:18px;border-radius:9px;background:#c4c4c4"></div>
<div class="a" style="left:1470px;top:1010px;width:14px;height:14px;border-radius:7px;background:#f4f4f4"></div>
<div class="a" style="left:1538px;top:207px;width:367px;height:281px;border:1px solid #dadada;border-radius:6px;background:#fdfdfd"></div>
<div class="a" style="left:1553px;top:222px;width:337px;height:27px;border:1px solid #dadada;border-radius:5px"></div>
<div class="t" style="left: 1561.5px; top: 229.57px; font-size: 11.5px; color: rgb(27, 34, 56); -webkit-text-stroke: 0.3px rgb(27, 34, 56); letter-spacing: 0.239px;">Highest Offer</div>
<div class="t" style="left: 1668.5px; top: 278.74px; font-size: 12px; color: rgb(51, 51, 51); letter-spacing: 0.84px;">No offer available</div>
<div class="a" style="left:1539px;top:318px;width:365px;height:1px;background:#e0e0e0"></div>
<svg style="left:1549px;top:337px" width="14" height="14"><circle cx="6.7" cy="7" r="5.8" stroke="#333" stroke-width="1.1" fill="none"></circle><path d="M6.7 3.5V7.3L9.2 9.5" stroke="#333" stroke-width="1.1" fill="none"></path></svg>
<div class="t" style="left: 1566.7px; top: 337.3px; font-size: 13px; color: rgb(34, 34, 34); -webkit-text-stroke: 0.3px rgb(34, 34, 34); letter-spacing: 0.713px;">Campaign Timer</div>
<div class="a" style="left:1830px;top:330px;width:63px;height:28px;border-radius:5px;background:#fafafa;box-shadow:0 1px 3px rgba(0,0,0,.18)"></div>
<div class="t" style="left: 1842.1px; top: 337.77px; font-size: 11.5px; color: rgb(34, 34, 34); -webkit-text-stroke: 0.3px rgb(34, 34, 34); letter-spacing: 0.481px;">Start</div>
<svg style="left:1874px;top:342px" width="8" height="5"><path d="M0 0H8L4 4.5Z" fill="#555"></path></svg>
<div class="a" style="left:1700px;top:373px;width:43px;height:18px;background:#12dc5c"></div>
<div class="t" style="left: 1705px; top: 378.3px; font-size: 8.5px; color: rgb(228, 246, 234); -webkit-text-stroke: 0.3px rgb(228, 246, 234); letter-spacing: -0.15px;">STAGE 1</div>
<div class="t" style="left: 1644px; top: 396.06px; font-size: 24.5px; color: rgb(17, 17, 17); font-weight: bold; letter-spacing: 2.894px;">36</div>
<div class="t" style="left: 1690.5px; top: 396.06px; font-size: 24.5px; color: rgb(17, 17, 17); font-weight: bold; letter-spacing: -3.806px;">12</div>
<div class="t" style="left: 1729.8px; top: 396.06px; font-size: 24.5px; color: rgb(17, 17, 17); font-weight: bold; letter-spacing: 4.194px;">48</div>
<div class="t" style="left: 1777.6px; top: 396.06px; font-size: 24.5px; color: rgb(17, 17, 17); font-weight: bold; letter-spacing: -3.706px;">12</div>
<div class="a" style="left:1679.9px;top:403.5px;width:5.2px;height:5.2px;border-radius:50%;background:#111"></div>
<div class="a" style="left:1679.9px;top:411.8px;width:5.2px;height:5.2px;border-radius:50%;background:#111"></div>
<div class="a" style="left:1719.0px;top:403.5px;width:5.2px;height:5.2px;border-radius:50%;background:#111"></div>
<div class="a" style="left:1719.0px;top:411.8px;width:5.2px;height:5.2px;border-radius:50%;background:#111"></div>
<div class="a" style="left:1766.8000000000002px;top:403.5px;width:5.2px;height:5.2px;border-radius:50%;background:#111"></div>
<div class="a" style="left:1766.8000000000002px;top:411.8px;width:5.2px;height:5.2px;border-radius:50%;background:#111"></div>
<div class="a" style="left:1656.1px;top:426px;width:17px;height:17px;border-radius:9px;background:#f0f0f0"></div>
<div class="t" style="left:1656.1px;top:429.83500000000004px;width:17px;text-align:center;font-size:10px;color:#9a9a9a">D</div>
<div class="a" style="left:1698.5px;top:426px;width:17px;height:17px;border-radius:9px;background:#f0f0f0"></div>
<div class="t" style="left:1698.5px;top:429.83500000000004px;width:17px;text-align:center;font-size:10px;color:#9a9a9a">H</div>
<div class="a" style="left:1742.5px;top:426px;width:17px;height:17px;border-radius:9px;background:#f0f0f0"></div>
<div class="t" style="left:1742.5px;top:429.83500000000004px;width:17px;text-align:center;font-size:10px;color:#9a9a9a">M</div>
<div class="a" style="left:1779.8px;top:426px;width:17px;height:17px;border-radius:9px;background:#f0f0f0"></div>
<div class="t" style="left:1779.8px;top:429.83500000000004px;width:17px;text-align:center;font-size:10px;color:#9a9a9a">S</div>
<div class="a" style="left:1565px;top:457px;width:311px;height:12px;border-radius:6px;background:linear-gradient(180deg,#7838e6 0%,#6c5ee0 45%,#72a6ee 100%)"></div>
<div class="a" style="left:1538px;top:504px;width:367px;height:106px;border:1px solid #dadada;border-radius:6px;background:#fdfdfd"></div>
<div class="a" style="left:1550px;top:516px;width:343px;height:27px;border:1px solid #dadada;border-radius:5px"></div>
<div class="t" style="left: 1557.5px; top: 524.27px; font-size: 11.5px; color: rgb(27, 34, 56); -webkit-text-stroke: 0.3px rgb(27, 34, 56); letter-spacing: 0.4px;">Activity</div>
<div class="a" style="left:1868px;top:520px;width:20px;height:20px;border-radius:10px;background:#f2f2f2"></div>
<svg style="left:1872px;top:524px" width="12" height="12"><circle cx="3" cy="3" r="1.6" stroke="#444" stroke-width="0.9" fill="none"></circle><path d="M6 3H11M1 8.5H6" stroke="#444" stroke-width="0.9"></path><circle cx="9" cy="8.5" r="1.6" stroke="#444" stroke-width="0.9" fill="none"></circle></svg>
<div class="t" style="left: 1667.2px; top: 572.39px; font-size: 12.3px; color: rgb(51, 51, 51); letter-spacing: 0.588px;">Activity Not Found</div>
<div class="a" style="left:1538px;top:627px;width:367px;height:480px;border:1px solid #dadada;border-radius:6px;background:#fdfdfd"></div>
<div class="a" style="left:1550px;top:638px;width:343px;height:28px;border:1px solid #dadada;border-radius:5px"></div>
<div class="t" style="left: 1559.3px; top: 646.67px; font-size: 11.5px; color: rgb(27, 34, 56); -webkit-text-stroke: 0.3px rgb(27, 34, 56); letter-spacing: 0.424px;">Messaging</div>
<div class="a" style="left:1556px;top:682px;width:332px;height:101px;border-radius:6px;background:#fbfbfb;box-shadow:0 0 3px rgba(0,0,0,.13)"></div>
<div class="t" style="left:1567.30px;top:693.23px;font-size:10.6px;color:#1a1a1a;letter-spacing:0.6px;-webkit-text-stroke:0.2px #1a1a1a">009 mizore street Lane | Hiren P &lt;--&gt;</div>
<div class="t" style="left:1567.30px;top:706.03px;font-size:10.6px;color:#1a1a1a;letter-spacing:0.6px;-webkit-text-stroke:0.2px #1a1a1a">Fifa L</div>
<div class="a" style="left:1864px;top:693px;width:12px;height:12px;border-radius:3px;background:#d42a2a"></div>
<div class="t" style="left:1868.00px;top:696.07px;font-size:7px;color:#f0c040">4</div>
<div class="a" style="left:1567px;top:726.5px;width:144px;height:16.5px;border-radius:3px;background:#efefef"></div>
<div class="t" style="left: 1569.8px; top: 730.63px; font-size: 8px; color: rgb(102, 102, 102); letter-spacing: 0.012px;">Last Activity: On Feb 16, 2025 5:35 AM</div>
<div class="a" style="left:1571.0px;top:750.8px;width:20px;height:20px;border-radius:10px;background:#fbfbfb;border:1px solid #6a6a6a"></div>
<div class="a" style="left:1567.5px;top:750.8px;width:20px;height:20px;border-radius:10px;background:#767676;border:1px solid #fbfbfb"></div>
<div class="t" style="left:1572.00px;top:757.03px;font-size:8px;color:#f0f0f0;font-weight:bold">HP</div>
<div class="t" style="left:1594.00px;top:759.53px;font-size:8px;color:#888">2</div>
<svg style="left:1864px;top:761px" width="12" height="10"><path d="M0.5 5H11M6.5 0.8L11 5L6.5 9.2" stroke="#333" stroke-width="1.1" fill="none"></path></svg>
<div class="a" style="left:1556px;top:791px;width:332px;height:101px;border-radius:6px;background:#fbfbfb;box-shadow:0 0 3px rgba(0,0,0,.13)"></div>
<div class="t" style="left:1567.30px;top:802.23px;font-size:10.6px;color:#1a1a1a;letter-spacing:0.6px;-webkit-text-stroke:0.2px #1a1a1a">009 mizore street Lane | Documents &amp;</div>
<div class="t" style="left:1567.30px;top:815.03px;font-size:10.6px;color:#1a1a1a;letter-spacing:0.6px;-webkit-text-stroke:0.2px #1a1a1a">Files</div>
<div class="a" style="left:1864px;top:802px;width:12px;height:12px;border-radius:3px;background:#eeeeee"></div>
<div class="t" style="left:1868.00px;top:805.00px;font-size:6.5px;color:#333">0</div>
<div class="a" style="left:1567px;top:835.5px;width:144px;height:16.5px;border-radius:3px;background:#efefef"></div>
<div class="t" style="left: 1569.8px; top: 839.63px; font-size: 8px; color: rgb(102, 102, 102); letter-spacing: 0.012px;">Last Activity: On Feb 16, 2025 5:31 AM</div>
<div class="a" style="left:1567.5px;top:859.8px;width:20px;height:20px;border-radius:10px;background:#767676;border:1px solid #fbfbfb"></div>
<div class="t" style="left:1572.00px;top:866.03px;font-size:8px;color:#f0f0f0;font-weight:bold">HP</div>
<div class="t" style="left:1590.50px;top:868.53px;font-size:8px;color:#888">1</div>
<svg style="left:1864px;top:870px" width="12" height="10"><path d="M0.5 5H11M6.5 0.8L11 5L6.5 9.2" stroke="#333" stroke-width="1.1" fill="none"></path></svg>
<div class="a" style="left:1556px;top:900px;width:332px;height:101px;border-radius:6px;background:#fbfbfb;box-shadow:0 0 3px rgba(0,0,0,.13)"></div>
<div class="t" style="left:1567.30px;top:911.23px;font-size:10.6px;color:#1a1a1a;letter-spacing:0.6px;-webkit-text-stroke:0.2px #1a1a1a">009 mizore street Lane | Campaign</div>
<div class="t" style="left:1567.30px;top:924.03px;font-size:10.6px;color:#1a1a1a;letter-spacing:0.6px;-webkit-text-stroke:0.2px #1a1a1a">Group</div>
<div class="a" style="left:1864px;top:911px;width:12px;height:12px;border-radius:3px;background:#eeeeee"></div>
<div class="t" style="left:1868.00px;top:914.00px;font-size:6.5px;color:#333">0</div>
<div class="a" style="left:1567px;top:944.5px;width:144px;height:16.5px;border-radius:3px;background:#efefef"></div>
<div class="t" style="left: 1569.8px; top: 948.63px; font-size: 8px; color: rgb(102, 102, 102); letter-spacing: 0.012px;">Last Activity: On Feb 16, 2025 5:31 AM</div>
<div class="a" style="left:1574.5px;top:968.8px;width:20px;height:20px;border-radius:10px;background:#fbfbfb;border:1px solid #6a6a6a"></div>
<div class="a" style="left:1571.0px;top:968.8px;width:20px;height:20px;border-radius:10px;background:#fbfbfb;border:1px solid #6a6a6a"></div>
<div class="a" style="left:1567.5px;top:968.8px;width:20px;height:20px;border-radius:10px;background:#767676;border:1px solid #fbfbfb"></div>
<div class="t" style="left:1572.00px;top:975.03px;font-size:8px;color:#f0f0f0;font-weight:bold">HP</div>
<div class="t" style="left:1597.50px;top:977.53px;font-size:8px;color:#888">3</div>
<svg style="left:1864px;top:979px" width="12" height="10"><path d="M0.5 5H11M6.5 0.8L11 5L6.5 9.2" stroke="#333" stroke-width="1.1" fill="none"></path></svg>
<div class="a" style="left:1556px;top:1009px;width:332px;height:101px;border-radius:6px;background:#fbfbfb;box-shadow:0 0 3px rgba(0,0,0,.13)"></div>
<div class="t" style="left:1567.30px;top:1020.23px;font-size:10.6px;color:#1a1a1a;letter-spacing:0.6px;-webkit-text-stroke:0.2px #1a1a1a">009 mizore street Lane | Hiren P &lt;--&gt;</div>
<div class="t" style="left:1567.30px;top:1033.03px;font-size:10.6px;color:#1a1a1a;letter-spacing:0.6px;-webkit-text-stroke:0.2px #1a1a1a">logeshwaran v</div>
<div class="a" style="left:1864px;top:1020px;width:12px;height:12px;border-radius:3px;background:#eeeeee"></div>
<div class="t" style="left:1868.00px;top:1023.00px;font-size:6.5px;color:#333">0</div>
<div class="a" style="left:1567px;top:1053.5px;width:144px;height:16.5px;border-radius:3px;background:#efefef"></div>
<div class="t" style="left: 1569.8px; top: 1057.63px; font-size: 8px; color: rgb(102, 102, 102); letter-spacing: 0.012px;">Last Activity: On Feb 16, 2025 5:31 AM</div>
<div id="overlay" class="a"></div>
<div class="a" style="left:660px;top:376px;width:600px;height:413px;border-radius:7px;background:#fff;box-shadow:0 8px 30px rgba(0,0,0,.38);overflow:hidden"><div class="a" style="left:1px;top:1px;width:598px;height:39px;border-radius:6px 6px 0 0;background:linear-gradient(157deg,#6a26d6 0%,#7060de 40%,#74a4f0 75%,#78d0fa 100%)"></div></div>
<div class="t" style="left: 960px; top: 391.11px; font-size: 10.5px; color: rgb(255, 255, 255); font-weight: bold; letter-spacing: -1.297px;">0C</div>
<div class="a" style="left:805px;top:427px;width:310px;height:27px;border-radius:4px;background:#fafafa;box-shadow:0 2px 7px rgba(0,0,0,.13)"></div>
<div class="t" style="left: 812.3px; top: 433.28px; font-size: 11.6px; color: rgb(17, 17, 17); letter-spacing: -0.064px;">009 mizore street Lane, aus, 25, New South Wales (NSW)</div>
<div class="a" style="left:667px;top:492px;width:28px;height:28px;border-radius:14px 14px 3px 14px;background:#fff;box-shadow:0 1px 3px rgba(0,0,0,.2)"></div>
<div class="a" style="left:668.5px;top:493.5px;width:25px;height:25px;border-radius:13px 13px 0 13px;background:#0a68f0"></div>
<div class="t" style="left: 673.5px; top: 501.04px; font-size: 10px; color: rgb(255, 255, 255); font-weight: bold; letter-spacing: 0.6px;">AG</div>
<div class="a" style="left:700px;top:488px;width:98px;height:30px;border-radius:15px 15px 15px 0;background:#f7f7f7;box-shadow:0 1px 2px rgba(0,0,0,.12)"></div>
<div class="t" style="left: 709.1px; top: 497.01px; font-size: 10.5px; color: rgb(31, 111, 242); -webkit-text-stroke: 0.15px rgb(31, 111, 242); letter-spacing: 0.697px;">Welcome Hiren</div>
<div class="a" style="left:704px;top:519px;width:300px;height:54px;border-radius:0 15px 15px 15px;background:#f7f7f7;box-shadow:0 1px 2px rgba(0,0,0,.12)"></div>
<div class="t" style="left: 713.9px; top: 527.71px; font-size: 10.5px; color: rgb(31, 111, 242); -webkit-text-stroke: 0.15px rgb(31, 111, 242); letter-spacing: 0.556px;">Access to retreX is free of charge and helps buyers</div>
<div class="t" style="left: 713.9px; top: 539.71px; font-size: 10.5px; color: rgb(31, 111, 242); -webkit-text-stroke: 0.15px rgb(31, 111, 242); letter-spacing: 0.684px;">obtain honest and current market insights whilst</div>
<div class="t" style="left: 713.9px; top: 551.51px; font-size: 10.5px; color: rgb(31, 111, 242); -webkit-text-stroke: 0.15px rgb(31, 111, 242); letter-spacing: 0.666px;">keeping your information private and secure.</div>
<div class="a" style="left:704px;top:575px;width:295px;height:30px;border-radius:0 15px 15px 15px;background:#f7f7f7;box-shadow:0 1px 2px rgba(0,0,0,.12)"></div>
<div class="t" style="left: 713.9px; top: 583.61px; font-size: 10.5px; color: rgb(31, 111, 242); -webkit-text-stroke: 0.15px rgb(31, 111, 242); letter-spacing: 0.607px;">What is your true opinion of estimated selling range?</div>
<div class="a" style="left:666px;top:613px;width:589px;height:54px;border-radius:4px;background:#fff;box-shadow:0 1px 2px rgba(0,0,0,.14)"></div>
<div class="a" style="left:706px;top:634px;width:457px;height:8px;border-radius:4px;border:1px solid #e0e0e0;background:#fff"></div>
<div class="a" style="left:858px;top:634px;width:153px;height:8px;background:#0a66ff"></div>
<div class="a" style="left:848.6px;top:628.5px;width:19.2px;height:19.2px;border-radius:50%;background:#fff;box-shadow:0 1px 3px rgba(0,0,0,.35)"></div>
<div class="a" style="left:1001.2px;top:628.5px;width:19.2px;height:19.2px;border-radius:50%;background:#fff;box-shadow:0 1px 3px rgba(0,0,0,.35)"></div>
<svg style="left:855px;top:633.5px" width="7" height="9"><path d="M1 0V9M3.5 0V9M6 0V9" stroke="#0a66ff" stroke-width="0.9"></path></svg>
<svg style="left:1007.5px;top:633.5px" width="7" height="9"><path d="M1 0V9M3.5 0V9M6 0V9" stroke="#0a66ff" stroke-width="0.9"></path></svg>
<div class="t" style="left: 806.1px; top: 651.96px; font-size: 9.5px; color: rgb(85, 85, 85); letter-spacing: 0.6px;">$20000000</div>
<div class="t" style="left: 1010.8px; top: 651.96px; font-size: 9.5px; color: rgb(85, 85, 85); letter-spacing: 0.687px;">$40000000</div>
<div class="a" style="left:1171px;top:625px;width:38px;height:30px;border-radius:15px;background:#f5f5f5;box-shadow:0 1px 3px rgba(0,0,0,.12)"></div>
<div class="t" style="left: 1178.5px; top: 634.11px; font-size: 10.5px; color: rgb(26, 111, 240); -webkit-text-stroke: 0.3px rgb(26, 111, 240); letter-spacing: 0.582px;">Next</div>
<div class="a" style="left:0px;top:1078px;width:1920px;height:2px;background:#000"></div>

</body></html>
